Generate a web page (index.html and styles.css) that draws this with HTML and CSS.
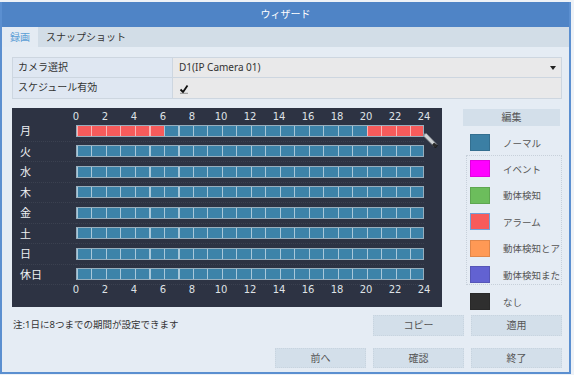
FILE: index.html
```html
<!DOCTYPE html>
<html lang="ja">
<head>
<meta charset="utf-8">
<title>ウィザード</title>
<link rel="stylesheet" href="styles.css">
</head>
<body>
<div class="dialog">
  <div class="titlebar">ウィザード</div>
  <div class="tabs">
    <div class="tab active">録画</div>
    <div class="tab">スナップショット</div>
  </div>
  <div class="content">
    <div class="form">
      <div class="label">カメラ選択</div>
      <div class="value select">D1(IP Camera 01)<span class="arrow"></span></div>
      <div class="label">スケジュール有効</div>
      <div class="value"><svg class="check" width="10" height="10" viewBox="0 0 10 10"><path d="M1.5 5.5 L4 8 L8.5 1.5" fill="none" stroke="#111" stroke-width="1.8"/><path d="M1 9.3 H9" stroke="#777" stroke-width="0.8"/></svg></div>
    </div>
    <div class="main">
      <div class="schedule">
        <div></div>
        <div class="hours top"><span>0</span><span>2</span><span>4</span><span>6</span><span>8</span><span>10</span><span>12</span><span>14</span><span>16</span><span>18</span><span>20</span><span>22</span><span>24</span></div>
        <div class="day">月</div><div class="row"><div class="bar mon"></div></div>
        <div class="day">火</div><div class="row"><div class="bar"></div></div>
        <div class="day">水</div><div class="row"><div class="bar"></div></div>
        <div class="day">木</div><div class="row"><div class="bar"></div></div>
        <div class="day">金</div><div class="row"><div class="bar"></div></div>
        <div class="day">土</div><div class="row"><div class="bar"></div></div>
        <div class="day">日</div><div class="row"><div class="bar"></div></div>
        <div class="day">休日</div><div class="row"><div class="bar"></div></div>
        <div></div>
        <div class="hours bottom"><span>0</span><span>2</span><span>4</span><span>6</span><span>8</span><span>10</span><span>12</span><span>14</span><span>16</span><span>18</span><span>20</span><span>22</span><span>24</span></div>
        <svg class="cursor" width="16" height="18" viewBox="0 0 16 18">
          <path d="M1 1 L3.5 0.5 L14 11.5 L11.5 14 L1 3.5 Z" fill="#cfd3d6" stroke="#6d7278" stroke-width="0.8"/>
          <path d="M11 10 L14.5 12.5 L12.5 15 L9.5 12 Z" fill="#2a2a2a" stroke="#111" stroke-width="0.6"/>
        </svg>
      </div>
      <div class="legend">
        <div class="edit-btn">編集</div>
        <div class="item first"><span class="sw normal"></span><span class="txt">ノーマル</span></div>
        <div class="box">
          <div class="item"><span class="sw event"></span><span class="txt">イベント</span></div>
          <div class="item"><span class="sw motion"></span><span class="txt">動体検知</span></div>
          <div class="item"><span class="sw alarm"></span><span class="txt">アラーム</span></div>
          <div class="item"><span class="sw mand"></span><span class="txt">動体検知とア</span></div>
          <div class="item"><span class="sw mor"></span><span class="txt">動体検知また</span></div>
        </div>
        <div class="item none-item"><span class="sw none"></span><span class="txt">なし</span></div>
      </div>
    </div>
    <div class="footer first-row">
      <span class="note">注:1日に8つまでの期間が設定できます</span>
      <div class="btns"><div class="btn">コピー</div><div class="btn">適用</div></div>
    </div>
    <div class="footer second-row">
      <div class="btns"><div class="btn">前へ</div><div class="btn">確認</div><div class="btn">終了</div></div>
    </div>
  </div>
</div>
</body>
</html>
```
FILE: styles.css
```css
* { box-sizing: border-box; }
html, body { margin: 0; padding: 0; }
body {
  background: #eef2f7;
  font-family: "Noto Sans", "Noto Sans CJK JP", sans-serif;
  font-size: 10px;
  color: #333;
  padding-top: 2px;
}
.dialog {
  width: 571px;
  height: 372px;
  background: #e5ecf4;
  border-left: 2px solid #5b8fd0;
  border-right: 2px solid #5b8fd0;
  border-bottom: 2px solid #5b8fd0;
  display: flex;
  flex-direction: column;
}
.titlebar {
  height: 25px;
  background: #4f84c6;
  color: #fff;
  text-align: center;
  line-height: 25px;
  font-size: 10px;
}
.tabs {
  height: 20px;
  background: #d2dde7;
  display: flex;
}
.tab {
  line-height: 20px;
  padding: 0 8px 0 8px;
  color: #333;
}
.tab.active {
  background: #e4ebf3;
  color: #5b9ed6;
}
.content {
  padding: 10px 7px 0 10px;
  display: flex;
  flex-direction: column;
}
.form {
  display: grid;
  grid-template-columns: 160px 1fr;
  grid-auto-rows: 20px;
  border: 1px solid #cdd6e0;
}
.label {
  background: #dfe7f2;
  padding-left: 5px;
  line-height: 19px;
  border-bottom: 1px solid #cdd6e0;
  border-right: 1px solid #cdd6e0;
}
.value {
  background: #e9e9ea;
  padding-left: 6px;
  line-height: 19px;
  border-bottom: 1px solid #cdd6e0;
  display: flex;
  align-items: center;
  position: relative;
}
.form .label:nth-last-child(2), .form .value:last-child { border-bottom: none; }
.select .arrow {
  position: absolute;
  right: 5px;
  top: 8px;
  border-left: 3px solid transparent;
  border-right: 3px solid transparent;
  border-top: 4px solid #222;
}
.check { margin-top: 1px; }
.main {
  display: flex;
  gap: 21px;
  margin-top: 9px;
  align-items: flex-start;
}
.schedule {
  position: relative;
  width: 430px;
  height: 199px;
  background: #2d3343;
  display: grid;
  grid-template-columns: 56px 348px;
  grid-template-rows: 13px repeat(8, 20.5px) 12px;
  padding-left: 8px;
  color: #e6e8ec;
}
.hours {
  display: flex;
  width: 377px;
  margin-left: -14.5px;
  font-family: "DejaVu Sans", sans-serif;
  font-size: 10px;
  color: #dfe2e6;
}
.hours span { flex: 1; text-align: center; }
.hours.top { align-items: flex-end; line-height: 10px; margin-bottom: -1px; padding-top: 4px; }
.hours.bottom { line-height: 12px; margin-top: -1px; }
.day {
  display: flex;
  align-items: center;
  font-size: 11px;
  color: #eef0f3;
  padding-bottom: 1px;
  border-bottom: 1px dotted rgba(255,255,255,0.07);
}
.row {
  display: flex;
  align-items: center;
  border-bottom: 1px dotted rgba(255,255,255,0.07);
}
.bar {
  width: 349px;
  height: 12px;
  border: 1px solid #97aebd;
  background-color: #3d83a9;
  background-image: repeating-linear-gradient(90deg, #a8c8da 0 1px, transparent 1px 14.5px);
}
.bar.mon {
  background-image:
    linear-gradient(90deg, transparent 0 87px, #a8c8da 87px 88px, transparent 88px),
    repeating-linear-gradient(90deg, rgba(255,255,255,0.55) 0 1px, transparent 1px 14.5px),
    linear-gradient(90deg, #f65b5b 0 87px, transparent 87px 290px, #f65b5b 290px);
}
.cursor {
  position: absolute;
  left: 411px;
  top: 25px;
}
.legend {
  width: 99px;
  display: flex;
  flex-direction: column;
  margin-top: 1px;
}
.edit-btn {
  width: 97px;
  height: 17px;
  background: #d3dfea;
  text-align: center;
  line-height: 17px;
  color: #555;
}
.item {
  display: flex;
  align-items: center;
  height: 17px;
  gap: 13px;
  white-space: nowrap;
}
.item .txt { color: #555; font-size: 9.5px; }
.item.first { margin-top: 8px; padding-left: 7px; }
.box {
  margin-top: 4px;
  margin-left: 3px;
  width: 96px;
  border: 1px dotted #c7d0da;
  padding: 4px 0 1px 3px;
  display: flex;
  flex-direction: column;
  gap: 9.5px;
}
.none-item { margin-top: 8px; padding-left: 7px; }
.sw {
  flex: none;
  width: 20px;
  height: 17px;
  border: 1px solid rgba(0,0,0,0.12);
}
.sw.normal { background: #3b7fa4; }
.sw.event { background: #ff00ff; }
.sw.motion { background: #6cbd5c; }
.sw.alarm { background: #f65b5b; border: 1px solid #6f9fd8; }
.sw.mand { background: #ff9955; }
.sw.mor { background: #6262d2; }
.sw.none { background: #2f2f2f; }
.footer {
  display: flex;
  align-items: center;
}
.first-row { margin-top: 5px; justify-content: space-between; }
.second-row { margin-top: 12px; justify-content: flex-end; }
.note { color: #333; padding-left: 1px; padding-bottom: 3px; font-size: 9.5px; }
.btns { display: flex; gap: 7px; }
.btn {
  width: 91px;
  height: 21px;
  background: #d3dfea;
  border: 1px dotted #c8d4df;
  color: #555;
  text-align: center;
  line-height: 19px;
}
.second-row .btn { height: 20px; line-height: 18px; }
```
